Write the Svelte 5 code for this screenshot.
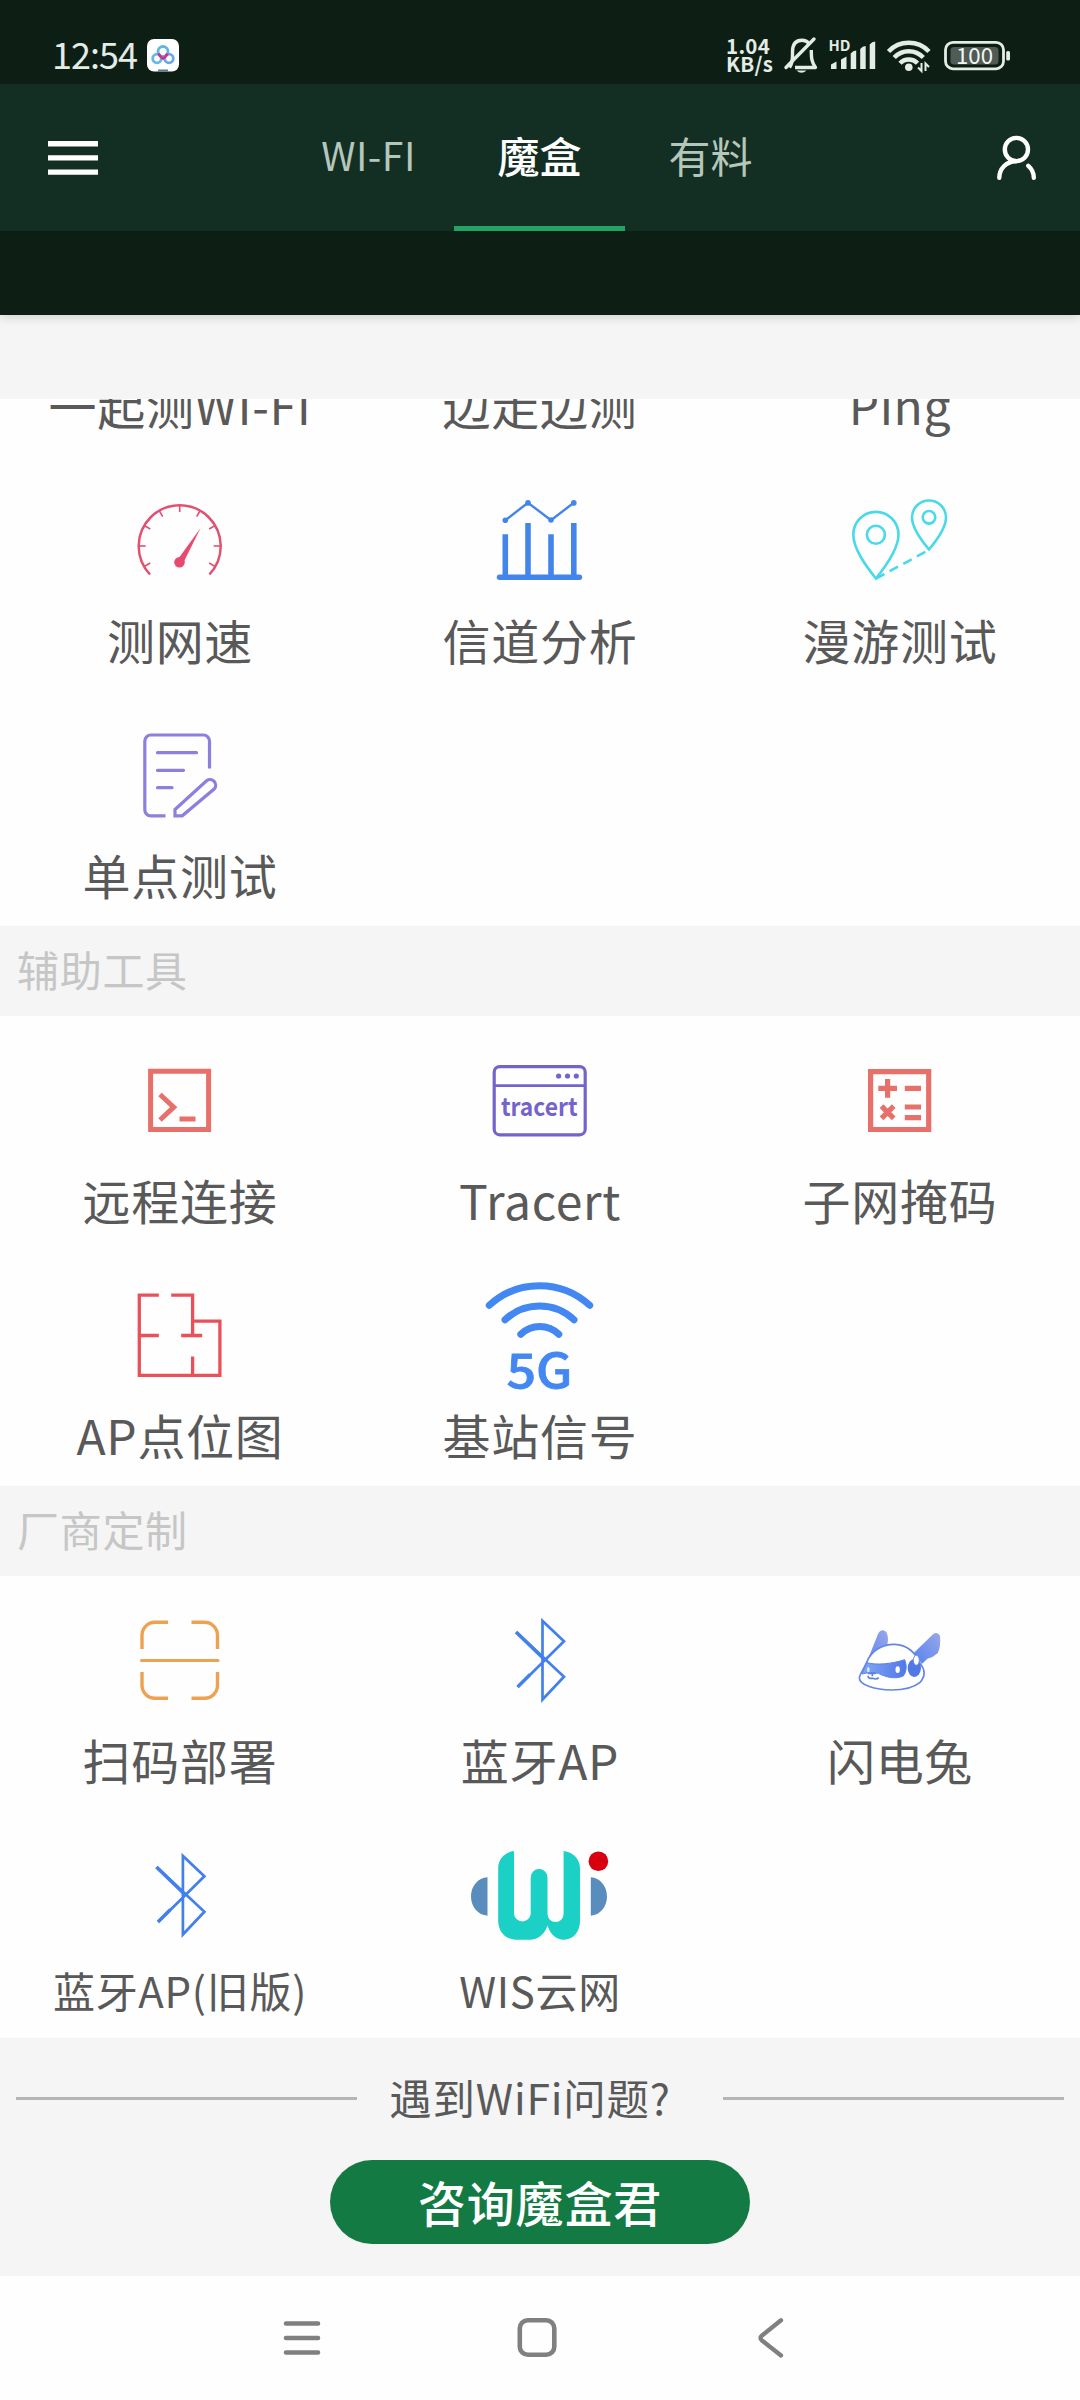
<script>
  const testing = [
    { label: '一起测WI-FI' },
    { label: '边走边测' },
    { label: 'Ping' },
    { label: '测网速', icon: speed, box: '120 480 120 120' },
    { label: '信道分析', icon: channel, box: '480 480 120 120' },
    { label: '漫游测试', icon: roam, box: '840 480 120 120' },
    { label: '单点测试', icon: note, box: '120 715 120 120' }
  ];
  const assist = [
    { label: '远程连接', icon: terminal, box: '120 1040 120 120' },
    { label: 'Tracert', icon: tracert, box: '480 1040 120 120' },
    { label: '子网掩码', icon: subnet, box: '840 1040 120 120' },
    { label: 'AP点位图', icon: floor, box: '120 1275 120 120' },
    { label: '基站信号', icon: cell5g, box: '480 1275 120 120' }
  ];
  const vendor = [
    { label: '扫码部署', icon: scan, box: '120 1600 120 120' },
    { label: '蓝牙AP', icon: bluetooth, box: '480 1600 120 120' },
    { label: '闪电兔', icon: rabbit, box: '840 1600 120 120' },
    { label: '蓝牙AP(旧版)', icon: bluetooth, box: '479.6 1600 120 120', small: true },
    { label: 'WIS云网', icon: wis, box: '480 1835 120 120', small: true }
  ];
  const ticks = [-120, -90, -60, -30, 0, 30, 60, 90, 120];
</script>

{#snippet speed()}
  <g fill="none" stroke="#e2506f" stroke-width="2.5">
    <path d="M150 574.5A41 41 0 1 1 209.4 574.5" />
    {#each ticks as a}
      <path d="M179.7 505v7" stroke-width="1.6" transform="rotate({a} 179.7 546)" />
    {/each}
  </g>
  <path d="M200.600 528L182.500 564.500L177 560.500Z" fill="#e84a6f" />
  <circle cx="179.5" cy="562.3" r="5.3" fill="#e84a6f" />
{/snippet}

{#snippet channel()}
  <g fill="none" stroke="#4485ec">
    <path d="M505.3 520.3L528 502.7L551 520.3L573.8 502.7" stroke-width="2.4" />
    <path d="M505.3 534.3V576M528 523V576M551 534.3V576M573.8 523V576" stroke-width="5.6" />
    <path d="M499.5 577.2H579.5" stroke-width="5.4" stroke-linecap="round" />
  </g>
  <g fill="#4485ec">
    <circle cx="505.3" cy="520.3" r="2.8" /><circle cx="528" cy="502.9" r="2.8" />
    <circle cx="551" cy="520" r="2.8" /><circle cx="573.8" cy="502.9" r="2.8" />
  </g>
{/snippet}

{#snippet roam()}
  <g fill="none" stroke="#48d9ea" stroke-width="2.6">
    <path d="M875.9 578.5C866 566 853.3 549 853.3 534.5A22.6 22.6 0 0 1 898.5 534.5C898.5 549 886 566 875.9 578.5Z" />
    <circle cx="875.9" cy="534.7" r="9" />
    <path d="M929 549.5C921 540 912 528 912 517.5A17 17 0 0 1 946 517.5C946 528 937 540 929 549.5Z" />
    <circle cx="929" cy="517.3" r="6.3" />
    <path d="M876 578.5L929 550" stroke-dasharray="9.5 6" />
  </g>
{/snippet}

{#snippet note()}
  <g fill="none" stroke="#8b80de" stroke-width="3.2">
    <path d="M209.5 768.5V741a6 6 0 0 0-6-6H150.800a6 6 0 0 0-6 6V809.800a6 6 0 0 0 6 6H165.500" />
    <path d="M157.500 752.700H196.500M157.500 770.300H183.500M157.500 787.700H172" stroke-linecap="round" />
    <path d="M175 815.800V809.500L206.800 780.500a5.700 5.700 0 0 1 7.600 8.300L182.200 815.800Z" />
  </g>
{/snippet}

{#snippet terminal()}
  <g fill="none" stroke="#e8706a" stroke-width="5">
    <path d="M150.600 1071.200H208.600V1129.500H150.600Z" />
    <path d="M160 1094.500L173.700 1107.200L160 1120" />
    <path d="M179.500 1119H195.500" />
  </g>
{/snippet}

{#snippet tracert()}
  <g fill="none" stroke="#7563cc" stroke-width="3.200">
    <rect x="494.200" y="1066.600" width="91" height="68.200" rx="5.500" />
    <path d="M494 1085.700H585" stroke-width="2.800" />
  </g>
  <g fill="#7563cc">
    <circle cx="558.600" cy="1076" r="2.600" /><circle cx="567.500" cy="1076" r="2.600" /><circle cx="576.300" cy="1076" r="2.600" />
    <text class="bold" x="501" y="1115.500" font-size="25" textLength="76.500" lengthAdjust="spacingAndGlyphs">tracert</text>
  </g>
{/snippet}

{#snippet subnet()}
  <g fill="none" stroke="#e8706a" stroke-width="5.200">
    <path d="M870.600 1071.600H928.700V1129.500H870.600Z" />
    <path d="M878.300 1088.400H897M887.600 1079V1097.800M904.800 1088.400H921" />
    <path d="M881.500 1106.200L893.700 1118.400M893.700 1106.200L881.500 1118.400M904.800 1107H921M904.800 1117.600H921" />
  </g>
{/snippet}

{#snippet floor()}
  <g fill="none" stroke="#e9505a" stroke-width="3.300">
    <path d="M158.800 1295.200H139.300V1375.300H219.900V1321.200H192.600" />
    <path d="M171.200 1295.200H192.600V1335.500M139.300 1335.500H158.800M181.200 1335.500H202.200M192.600 1356.500V1375" />
  </g>
{/snippet}

{#snippet cell5g()}
  <g fill="none" stroke="#4287f2" stroke-width="7" stroke-linecap="round">
    <path d="M489.300 1305.300A74 74 0 0 1 589.700 1305.300" />
    <path d="M505 1319.800A50 50 0 0 1 574 1319.800" />
    <path d="M520.800 1334.300A27 27 0 0 1 558.800 1334.300" />
  </g>
  <text class="medium" x="506.500" y="1388" font-size="48" textLength="66" lengthAdjust="spacingAndGlyphs" fill="#4287f2" stroke="#4287f2" stroke-width="0.800">5G</text>
{/snippet}

{#snippet scan()}
  <g fill="none" stroke="#eda253" stroke-width="3.400">
    <path d="M168 1622.300H155a13 13 0 0 0-13 13V1649M191.500 1622.300H204.500a13 13 0 0 1 13 13V1649M168 1698.300H155a13 13 0 0 1-13-13V1672M191.500 1698.300H204.500a13 13 0 0 0 13-13V1672" />
    <path d="M141.500 1660.500H218" stroke-linecap="round" stroke-width="3" />
  </g>
{/snippet}

{#snippet bluetooth()}
  <g fill="none" stroke="#4380ec" stroke-width="2.700">
    <path d="M518 1686.700L564 1641.300L542.500 1621V1699.500L564 1676.700L516.500 1632.300" />
    <path d="M516 1632L544 1659" stroke-width="3.500" />
    <path d="M517.500 1687L530 1674.500" stroke-width="3.200" />
  </g>
{/snippet}

{#snippet rabbit()}
  <defs>
    <linearGradient id="fur" x1="0" y1="1" x2="1" y2="0">
      <stop offset="0" stop-color="#5483ee" /><stop offset="1" stop-color="#9aa6ea" />
    </linearGradient>
    <linearGradient id="mask" x1="0" y1="0" x2="1" y2="0">
      <stop offset="0" stop-color="#82a6f6" /><stop offset="1" stop-color="#5079e6" />
    </linearGradient>
  </defs>
  <g transform="translate(840 1610) scale(.3333)">
    <path d="M72 178L114 72Q124 53 139 66Q147 82 142 105Q100 118 80 158Z" fill="url(#fur)" />
    <path d="M222 128L280 72Q292 64 300 77Q303 110 293 130Q280 142 262 146L246 162Z" fill="url(#fur)" />
    <path d="M80 157C95 120 130 102 165 103C200 105 225 125 240 160C256 180 256 200 240 217C215 238 180 240 155 240C105 240 58 225 58 203C60 190 70 180 80 157Z" fill="#fff" stroke="#6288e2" stroke-width="5" />
    <path d="M80 158C110 166 155 162 194 149C201 165 200 185 190 198C168 208 140 203 115 190C100 186 82 188 66 192Z" fill="url(#mask)" stroke="#5a82ea" stroke-width="3" />
    <ellipse cx="173" cy="179" rx="6.500" ry="10" fill="#fff" />
    <ellipse cx="85" cy="179" rx="4" ry="8" fill="#dfe9ff" />
    <ellipse cx="223" cy="174" rx="20" ry="27" fill="#5079e6" />
    <ellipse cx="229" cy="151" rx="9" ry="15" fill="#fff" stroke="#6288e2" stroke-width="3" />
    <path d="M84 190H108M97 190V199M84 197Q84 207 98 205Q110 210 116 203" fill="none" stroke="#5a80e4" stroke-width="5" />
  </g>
{/snippet}

{#snippet wis()}
  <path d="M514 1851C505 1852 498.200 1859 498.200 1868V1921C498.200 1932 506 1939.700 516 1939.700H530C538 1939.700 545 1934 547.500 1925.500C550 1934 556 1939.700 564 1939.700C573 1939.700 580 1932 580 1921V1868C580 1859 573 1852 563.600 1851V1914A8 8 0 0 1 547.500 1914V1877.500A8.400 8.400 0 0 0 530.700 1877.500V1914A8.400 8.400 0 0 1 514 1914Z" fill="#1bd0c4" />
  <path d="M487.500 1877.300V1915.700C478 1915 471 1907 471 1896.500S478 1878 487.500 1877.300ZM590.800 1877.300V1915.700C600 1915 607 1907 607 1896.500S600 1878 590.800 1877.300Z" fill="#588dbd" />
  <circle cx="598.400" cy="1861.200" r="9.800" fill="#d8000f" />
{/snippet}

{#snippet grid(items)}
  <div class="grid">
    {#each items as item}
      <div class="cell">
        <svg class="icon" viewBox={item.box ?? '0 0 120 120'}>
          {#if item.icon}{@render item.icon()}{/if}
        </svg>
        <span class="label" class:small={item.small}>{item.label}</span>
      </div>
    {/each}
  </div>
{/snippet}

<div class="screen">
  <header>
    <div class="status">
      <span class="time">12:54</span>
      <svg class="app" viewBox="0 0 32 33" width="32" height="33">
        <rect width="32" height="32.500" rx="7" fill="#fff" />
        <g fill="none" stroke-width="2.800">
          <circle cx="10" cy="19.500" r="4.300" stroke="#64b9e6" />
          <circle cx="22" cy="19.500" r="4.300" stroke="#6aa8e8" />
          <circle cx="16" cy="12.500" r="5" stroke="#62b5dc" />
          <path d="M11.500 14.500Q13 18 16 19.500Q19 18 20.500 14.500" stroke="#d22f8c" />
        </g>
        <path d="M11 31.500H21" stroke="#557a92" stroke-width="2" />
      </svg>
      <div class="rate"><span>1.04</span><span>KB/s</span></div>
      <svg class="bell" viewBox="784 36 36 38" width="36" height="38" fill="none" stroke="#e3ece5">
        <path d="M789.500 67.500C793 63 792.500 57 792.500 52C792.500 44 796 40.300 802 40.300C805 40.300 807.500 41.500 809 43.500M811.300 50C811.300 58 811.500 62 815.500 67.500H795" stroke-width="3.400" stroke-linejoin="round" />
        <path d="M786 67.500L814 39" stroke-width="3.400" stroke-linecap="round" />
        <path d="M796.500 70.500Q801.500 75 806.500 70.500Z" fill="#e3ece5" stroke="none" />
      </svg>
      <svg class="signal" viewBox="828 36 48 38" width="48" height="38" fill="#e3ece5">
        <text class="bold" x="828.500" y="51" font-size="14.500" textLength="22" lengthAdjust="spacingAndGlyphs">HD</text>
        <path d="M831 69V64.500L836.500 61.500V69ZM841 69V59.500L846.500 56.500V69ZM850.700 69V53.500Q853 50.500 856.200 50.500V69ZM860.200 69V49Q862.500 46 865.700 46V69ZM869.700 69V44.500Q872 41.500 875.200 41.500V69Z" />
      </svg>
      <svg class="wifi" viewBox="886 36 46 38" width="46" height="38" fill="none" stroke="#e3ece5" stroke-width="4.500">
        <path d="M888.500 51.500A28 28 0 0 1 929 51.500M894.200 57.500A20 20 0 0 1 923.300 57.500M900 63.300A12 12 0 0 1 917.500 63.300" />
        <circle cx="908.800" cy="67.200" r="3.800" fill="#e3ece5" stroke="none" />
        <path d="M921.500 63V71L918 67.500M925.500 71V63.500L929 67" stroke-width="2" />
      </svg>
      <svg class="battery" viewBox="943 38 68 33" width="68" height="33">
        <rect x="945.500" y="41.300" width="58" height="26.500" rx="7.500" fill="none" stroke="#e3ece5" stroke-width="2.800" />
        <rect x="950.500" y="46" width="48" height="17.500" rx="3.500" fill="#4f5b54" />
        <rect x="1006.200" y="50" width="3.800" height="9.500" rx="1.500" fill="#e3ece5" />
        <text x="956" y="62.600" font-size="22.500" textLength="37" lengthAdjust="spacingAndGlyphs" fill="#f2f6f3">100</text>
      </svg>
    </div>
    <nav>
      <svg class="burger" viewBox="48 136 50 42" width="50" height="42" stroke="#fff" stroke-width="5.400">
        <path d="M48 142.700H98M48 156.900H98M48 171.100H98" />
      </svg>
      <div class="tabs">
        <span class="tab latin">WI-FI</span>
        <span class="tab active">魔盒</span>
        <span class="tab">有料</span>
      </div>
      <svg class="user" viewBox="994 132 44 50" width="44" height="50" fill="none" stroke="#fff" stroke-width="4.400" stroke-linecap="round">
        <circle cx="1016.400" cy="148.500" r="11.600" />
        <path d="M1016 160.200C1006 160.500 999.300 168 999.300 176.800M1028.300 164.800C1032 168 1033.800 172 1033.800 176.800" />
      </svg>
    </nav>
    <div class="strip"></div>
  </header>
  <div class="ad"></div>
  <section class="clipped">{@render grid(testing)}</section>
  <h2>辅助工具</h2>
  <section>{@render grid(assist)}</section>
  <h2>厂商定制</h2>
  <section>{@render grid(vendor)}</section>
  <footer>
    <div class="question"><i></i><span>遇到WiFi问题?</span><i></i></div>
    <button>咨询魔盒君</button>
  </footer>
  <div class="system">
    <svg viewBox="281 2317 42 42" width="42" height="42" fill="none" stroke="#808080" stroke-linecap="round">
      <path d="M286 2323.500H318M286 2338H318M286 2352.500H318" stroke-width="4.600" />
    </svg>
    <svg viewBox="516 2317 42 42" width="42" height="42" fill="none" stroke="#808080" stroke-width="4.600">
      <rect x="519.800" y="2320.300" width="34.500" height="34.500" rx="8" />
    </svg>
    <svg viewBox="750 2317 42 42" width="42" height="42" fill="none" stroke="#808080" stroke-width="4.300" stroke-linecap="round">
      <path d="M781 2320.300L762 2335.500Q759 2338 762 2340.500L781 2355.500" />
    </svg>
  </div>
</div>

<style>
  :global(body) { margin: 0; background: #fefefe; }
  .screen {
    width: 1080px;
    height: 2400px;
    overflow: hidden;
    display: flex;
    flex-direction: column;
    background: #fefefe;
    font-family: "Noto Sans CJK SC", "Noto Sans", sans-serif;
    color: #595959;
  }
  svg { display: block; flex: none; overflow: visible; }
  .bold { font-weight: 700; }
  .medium { font-weight: 500; }
  header { z-index: 1; box-shadow: 0 2px 10px rgba(20, 30, 10, 0.16); }
  .status {
    height: 84px;
    box-sizing: border-box;
    padding: 26px 69px 0 52px;
    display: flex;
    align-items: center;
    background: #0d1e14;
    color: #e3ece5;
  }
  .time { width: 95px; padding-bottom: 5px; font-size: 36px; line-height: 40px; letter-spacing: -1px; }
  .rate {
    margin-left: auto;
    width: 58px;
    padding-bottom: 2px;
    display: flex;
    flex-direction: column;
    font-size: 20.5px;
    font-weight: 700;
    line-height: 18.5px;
    letter-spacing: 0.3px;
  }
  .signal { margin-left: 8px; }
  .wifi { margin-left: 10px; }
  .battery { margin-left: 11px; }
  nav {
    height: 147px;
    box-sizing: border-box;
    padding: 0 42px 0 48px;
    display: grid;
    grid-template-columns: 235px 513px 1fr;
    justify-items: start;
    align-items: center;
    background: #132e22;
  }
  .user { justify-self: end; }
  .tabs { display: flex; align-self: stretch; }
  .tab {
    width: 171px;
    box-sizing: border-box;
    line-height: 141px;
    text-align: center;
    font-size: 42px;
    color: #b5c6bb;
  }
  .latin { font-size: 39px; letter-spacing: 0.5px; }
  .active { color: #fff; font-weight: 500; border-bottom: 5px solid #25a365; }
  .strip { height: 84px; background: #0d1e14; }
  .ad { height: 84px; flex: none; background: #f5f5f5; }
  section { flex: none; }
  .clipped {
    height: 527px;
    display: flex;
    flex-direction: column;
    justify-content: flex-end;
    overflow: hidden;
  }
  .grid { display: grid; grid-template-columns: repeat(3, 360px); }
  .cell {
    display: flex;
    flex-direction: column;
    align-items: center;
    padding: 24px 0 20px;
  }
  .icon { width: 120px; height: 120px; margin-bottom: 7px; }
  .label { font-size: 48px; line-height: 64px; letter-spacing: 0.7px; white-space: nowrap; }
  .label.small { font-size: 42px; line-height: 56px; }
  h2 {
    flex: none;
    height: 90px;
    box-sizing: border-box;
    margin: 0;
    padding-left: 17px;
    background: #f5f5f5;
    color: #c6c6c6;
    font-size: 42px;
    font-weight: 400;
    line-height: 85px;
    letter-spacing: 0.7px;
  }
  footer {
    height: 238px;
    box-sizing: border-box;
    padding: 29px 16px 0;
    display: flex;
    flex-direction: column;
    align-items: center;
    gap: 31px;
    background: #f5f5f5;
  }
  .question { width: 100%; display: flex; align-items: center; height: 62px; }
  .question i { width: 341px; height: 3px; background: #b5b5b5; }
  .question span { flex: 1; text-align: center; padding: 0 20px 3px 0; font-size: 42.5px; line-height: 56px; letter-spacing: 0.8px; white-space: nowrap; }
  button {
    width: 420px;
    height: 84px;
    border: 0;
    border-radius: 42px;
    padding: 0 0 3px;
    background: #147a43;
    color: #fff;
    font: 500 48px/78px "Noto Sans CJK SC", sans-serif;
    letter-spacing: 0.8px;
  }
  .system {
    height: 124px;
    display: flex;
    justify-content: center;
    gap: 192.5px;
    padding: 41px 7px 0 0;
    box-sizing: border-box;
  }
</style>
